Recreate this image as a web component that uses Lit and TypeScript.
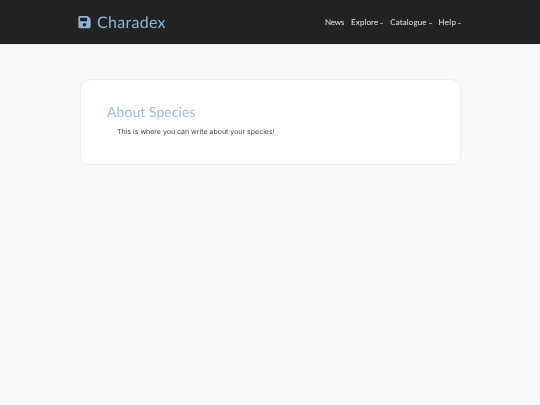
import { LitElement, html, css } from "lit";
import { customElement } from "lit/decorators.js";

@customElement("app-root")
export class AppRoot extends LitElement {
  static styles = css`
    :host { display: block; min-height: 405px; background: #f8f8f8; font-family: "Inter", "Open Sans", sans-serif; text-rendering: geometricPrecision; }
    .nav { height: 44px; background: #222222; border-bottom: 1px solid #e8e8e8; box-sizing: content-box; display: flex; align-items: center; justify-content: space-between; padding: 0 79px 0 78px; }
    .brand { display: flex; align-items: center; gap: 6px; color: #8fb4d3; font-family: "Lato", sans-serif; font-size: 16px; letter-spacing: 0.3px; will-change: transform; }
    .brand svg { width: 13px; height: 14px; display: block; margin-bottom: 1.5px; }
    .links { display: flex; gap: 7px; align-items: center; color: #e6e6e6; font-family: "Lato", sans-serif; font-size: 8px; letter-spacing: 0.1px; will-change: transform; }
    .tight { letter-spacing: -0.2px; }
    .wide { letter-spacing: 0.25px; }
    .caret { display: inline-block; margin-left: 2px; width: 3px; height: 2px; vertical-align: 1px; border-bottom: 1px solid #999; }
    main { padding: 33.5px 79.5px 0; }
    .card { height: 84px; background: #fff; border: 1px solid #eeeeee; border-radius: 10px; box-sizing: content-box; padding: 0 26.5px; display: flex; flex-direction: column; width: 326px; }
    h1 { margin: 23.5px 0 0; font-family: "Lato", sans-serif; font-size: 14px; line-height: 18px; font-weight: 400; color: #9dbcd8; letter-spacing: 0.05px; will-change: transform; }
    p { margin: 5.5px 0 0 10px; font-size: 7px; line-height: 10px; color: #444; will-change: transform; }
  `;
  render() {
    return html`
      <div class="nav">
        <div class="brand">
          <svg viewBox="0 0 448 512" aria-hidden="true"><path fill="currentColor" d="M433.9 129.9l-83.9-83.9A48 48 0 0 0 316.1 32H48C21.5 32 0 53.5 0 80v352c0 26.5 21.5 48 48 48h352c26.5 0 48-21.5 48-48V163.9a48 48 0 0 0-14.1-34zM224 416c-35.3 0-64-28.7-64-64s28.7-64 64-64 64 28.7 64 64-28.7 64-64 64zm96-304.5V212c0 6.6-5.4 12-12 12H76c-6.6 0-12-5.4-12-12V108c0-6.6 5.4-12 12-12h228.5c3.2 0 6.2 1.3 8.5 3.5l3.5 3.5c2.3 2.3 3.5 5.3 3.5 8.5z"/></svg>
          <span>Charadex</span>
        </div>
        <div class="links">
          <span class="tight">News</span>
          <span>Explore<i class="caret"></i></span>
          <span>Catalogue<i class="caret"></i></span>
          <span class="wide">Help<i class="caret"></i></span>
        </div>
      </div>
      <main>
        <div class="card">
          <h1>About Species</h1>
          <p>This is where you can write about your species!</p>
        </div>
      </main>
    `;
  }
}
